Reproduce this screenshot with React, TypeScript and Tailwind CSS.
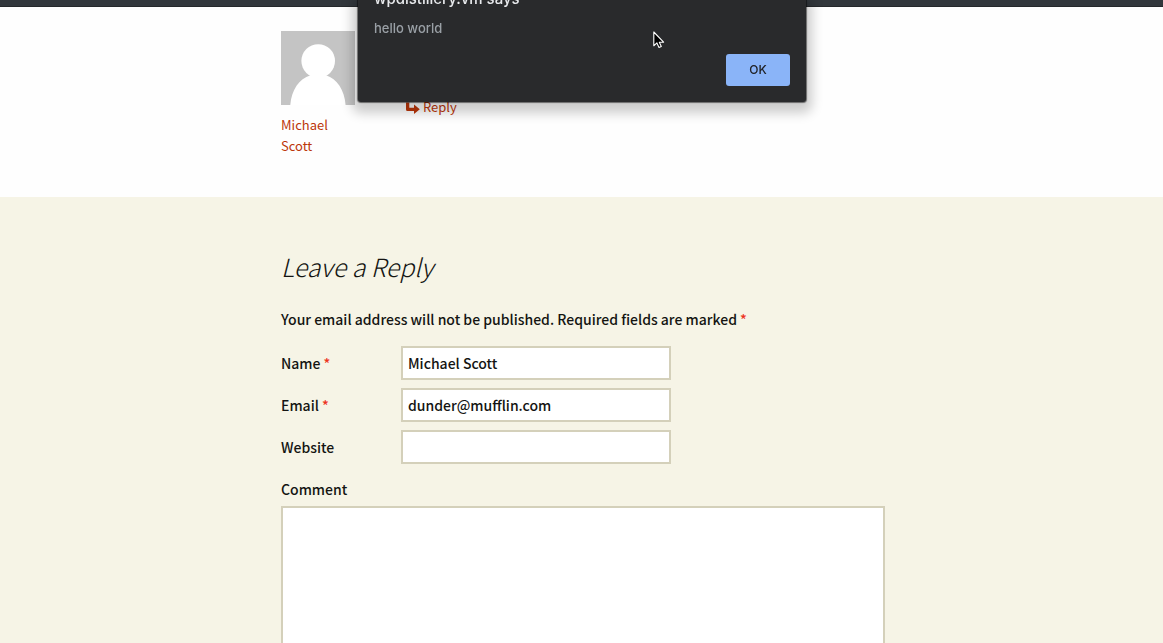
import type { ReactNode } from "react";

function Required() {
  return <span className="text-[#ed331c]">*</span>;
}

function Field({ id, label, type, value, required }: {
  id: string;
  label: ReactNode;
  type: string;
  value?: string;
  required?: boolean;
}) {
  return (
    <div className="flex items-center">
      <label htmlFor={id} className="w-[120px] shrink-0">
        {label} {required && <Required />}
      </label>
      <input
        id={id}
        type={type}
        defaultValue={value}
        required={required}
        className="h-[34px] w-[270px] border-2 border-[#d4d0ba] bg-white px-[5px] outline-none"
      />
    </div>
  );
}

function Avatar() {
  return (
    <svg viewBox="0 0 74 74" className="h-[74px] w-[74px]" role="img" aria-label="Michael Scott">
      <rect width="74" height="74" fill="#c4c4c4" />
      <circle cx="37.2" cy="30" r="16.8" fill="#fff" />
      <path d="M9.300 74C10.500 59 18 48 29.500 44.300L28 43H46L45 44.300C56 48 63.500 59 64.600 74Z" fill="#fff" />
    </svg>
  );
}

function Dialog() {
  return (
    <div className="pointer-events-none fixed inset-x-0 top-0 flex justify-center pl-px">
      <div
        role="alertdialog"
        aria-labelledby="dialog-title"
        aria-describedby="dialog-message"
        className="pointer-events-auto relative flex w-[448px] flex-col rounded-b-[3px] bg-[#292a2c] px-4 pb-4 font-['Inter',sans-serif] shadow-[0_0_1px_1px_rgba(0,0,0,0.5),0_5px_12px_6px_rgba(0,0,0,0.2)]"
      >
        <h2 id="dialog-title" className="-mt-[11px] text-[15px] leading-5 font-medium text-[#e8eaed]">
          wpdistillery.vm says
        </h2>
        <p id="dialog-message" className="mt-[9px] text-[13px] leading-5 text-[#9aa0a6]">
          hello world
        </p>
        <button
          type="button"
          className="mt-4 h-8 w-16 self-end rounded-[3px] bg-[#8ab4f8] text-[12px] font-medium text-[#202124]"
        >
          OK
        </button>
        <svg viewBox="0 0 12 18" className="absolute top-[31px] left-[295px] h-[18px] w-3" aria-hidden="true">
          <path
            d="M.8 1V14.800l3.100-2.900 2.100 4.600 2.300-1L6.300 11.200H10.600Z"
            fill="#000"
            stroke="#fff"
            strokeWidth="1.100"
            strokeLinejoin="round"
          />
        </svg>
      </div>
    </div>
  );
}

export default function App() {
  return (
    <div className="flex h-screen flex-col overflow-hidden bg-[#fefefe] font-['Noto_Sans_CJK_SC',sans-serif] text-[14px] leading-6 font-medium text-[#141412]">
      <header className="h-[7px] shrink-0 border-b border-[#25282b] bg-[#32373c]" />

      <section className="h-[190px] shrink-0 pt-6 pl-[3px]">
        <article className="mx-auto flex max-w-[604px] items-start text-[13px] leading-[21px] font-normal text-[#bc360a]">
          <div className="flex w-[125px] flex-col gap-[9px]">
            <Avatar />
            <a href="#author" className="w-[74px]">Michael Scott</a>
          </div>
          <a href="#respond" className="mt-[65px] flex items-center gap-[3px]">
            <svg viewBox="0 0 14 12" className="mt-[2px] h-3 w-[14px]" aria-hidden="true">
              <path d="M0 .5h3.300v5.300h4.700V2.600L13.800 7.200 8 12V9H1.500Q0 9 0 7.500Z" fill="#bc360a" />
            </svg>
            Reply
          </a>
        </article>
      </section>

      <main className="flex-1 bg-[#f6f4e6] pt-[51px] pl-[3px]">
        <form className="mx-auto max-w-[604px]" onSubmit={(e) => e.preventDefault()}>
          <h3 className="text-[25px] leading-9 font-light italic">Leave a Reply</h3>
          <p className="mt-[23px]">
            Your email address will not be published. Required fields are marked <Required />
          </p>
          <div className="mt-[15px] flex flex-col gap-2">
            <Field id="author" label="Name" type="text" value="Michael Scott" required />
            <Field id="email" label="Email" type="email" value="dunder@mufflin.com" required />
            <Field id="url" label="Website" type="url" />
          </div>
          <label htmlFor="comment" className="mt-[13px] block">Comment</label>
          <textarea
            id="comment"
            rows={8}
            className="mt-[5px] block w-full resize-none border-2 border-[#d4d0ba] bg-white p-[5px] outline-none"
          />
        </form>
      </main>

      <Dialog />
    </div>
  );
}
